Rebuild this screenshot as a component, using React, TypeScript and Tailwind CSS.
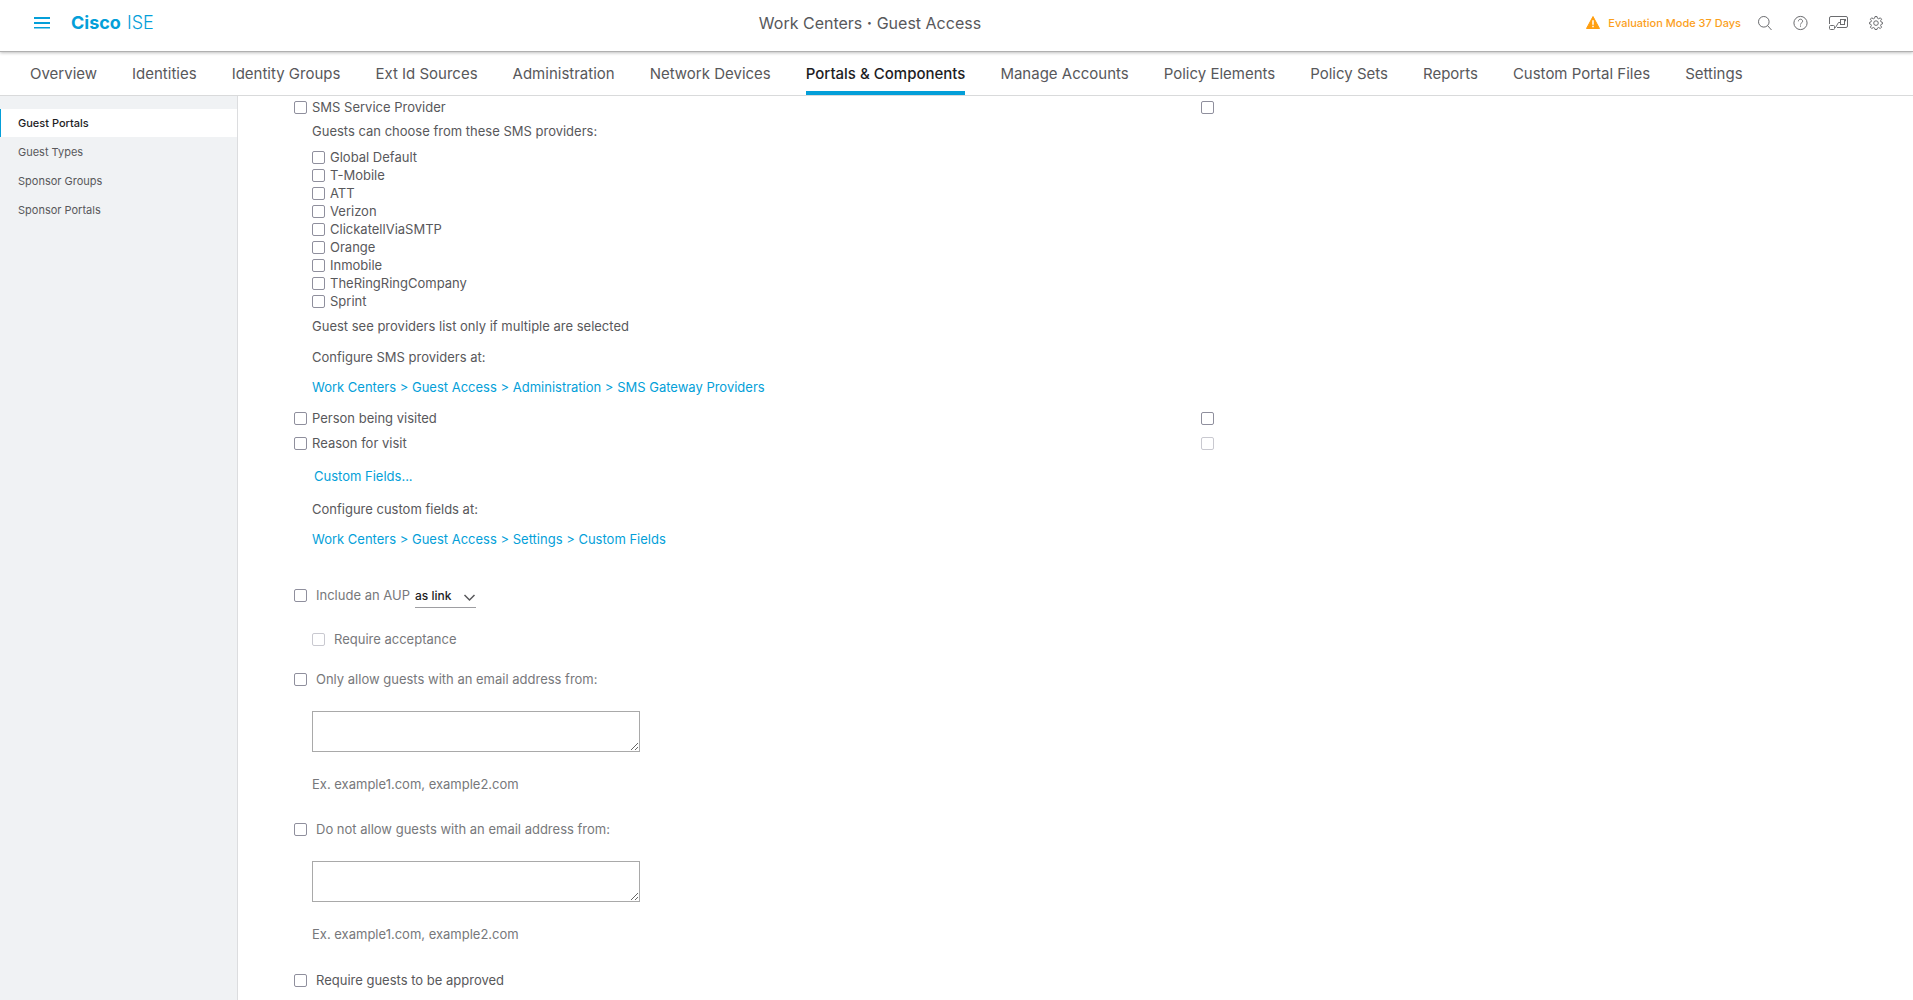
import React, { useId } from "react";

const tabs = [
  "Overview",
  "Identities",
  "Identity Groups",
  "Ext Id Sources",
  "Administration",
  "Network Devices",
  "Portals & Components",
  "Manage Accounts",
  "Policy Elements",
  "Policy Sets",
  "Reports",
  "Custom Portal Files",
  "Settings",
];

const sections = ["Guest Portals", "Guest Types", "Sponsor Groups", "Sponsor Portals"];

const providers = [
  "Global Default",
  "T-Mobile",
  "ATT",
  "Verizon",
  "ClickatellViaSMTP",
  "Orange",
  "Inmobile",
  "TheRingRingCompany",
  "Sprint",
];

type CheckProps = { id?: string; label?: string; disabled?: boolean };

function Check({ id, label, disabled }: CheckProps) {
  return (
    <input
      id={id}
      type="checkbox"
      aria-label={label}
      disabled={disabled}
      className="size-[13px] shrink-0 appearance-none rounded-[2px] border border-[#8f8f9d] bg-white checked:bg-[#049fd9] disabled:border-[#c9c9d0]"
    />
  );
}

type FieldProps = {
  children: React.ReactNode;
  wide?: boolean;
  muted?: boolean;
  disabled?: boolean;
};

function CheckField({ children, wide, muted, disabled }: FieldProps) {
  const id = useId();
  return (
    <div className={wide ? "flex h-[18px] items-center gap-[9px]" : "flex h-[18px] items-center gap-[5px]"}>
      <Check id={id} disabled={disabled} />
      <label htmlFor={id} className={muted ? "text-[#77787b]" : ""}>
        {children}
      </label>
    </div>
  );
}

function RequiredRow({ name, disabled }: { name: string; disabled?: boolean }) {
  return (
    <div className="flex items-center">
      <div className="w-[56%]">
        <CheckField>{name}</CheckField>
      </div>
      <Check label={`${name} required`} disabled={disabled} />
    </div>
  );
}

function DomainField({ label }: { label: string }) {
  return (
    <>
      <CheckField wide muted>
        {label}
      </CheckField>
      <div className="mt-[23px] ml-[18px] text-[#77787b]">
        <textarea
          aria-label={label}
          className="block h-[41px] w-[328px] resize border border-[#a9a9a9] bg-white"
        />
        <p className="mt-[23px]">Ex. example1.com, example2.com</p>
      </div>
    </>
  );
}

function IconButton({ label, children }: { label: string; children: React.ReactNode }) {
  return (
    <button type="button" aria-label={label} className="text-[#6b6c6f]">
      {children}
    </button>
  );
}

export default function App() {
  return (
    <div className="flex min-h-screen flex-col bg-white font-['Inter','Liberation_Sans',sans-serif] text-[13px] leading-[18px] text-[#58585b]">
      <header className="relative flex h-[52px] items-center justify-between border-b border-[#b0b0b0] pr-[30px] pb-[6px] pl-[34px] shadow-[0_1px_3px_rgba(0,0,0,0.25)]">
        <div className="flex items-center gap-[21px]">
          <button type="button" aria-label="Menu" className="text-[#049fd9]">
            <svg width="16" height="14" viewBox="0 0 16 14" fill="currentColor">
              <path d="M0 1h16v2H0zM0 6h16v2H0zM0 11h16v1.500H0z" />
            </svg>
          </button>
          <a href="#home" className="flex gap-[6px] text-[18px] leading-6 text-[#049fd9]">
            <span className="font-bold">Cisco</span>
            <span className="font-light">ISE</span>
          </a>
        </div>
        <h1 className="text-[16px] leading-6">
          Work Centers <b>·</b> Guest Access
        </h1>
        <div className="flex items-center">
          <svg width="14" height="13" viewBox="0 0 14 13">
            <path d="M7 .5 13.500 12.500H.5z" fill="#ff9e0f" stroke="#ff9e0f" strokeLinejoin="round" />
            <path d="M7 4.300v4.400M7 9.800v1.500" stroke="#fff" strokeWidth="1.500" />
          </svg>
          <a href="#licensing" className="ml-2 text-[11px] font-medium text-[#fba01c]">
            Evaluation Mode 37 Days
          </a>
          <div className="ml-[17px] flex items-center gap-[21px]">
            <IconButton label="Search">
              <svg width="14" height="16" viewBox="0 0 14 16" fill="none" stroke="currentColor">
                <circle cx="5.800" cy="6.800" r="5.300" />
                <path d="m9.500 10.500 4 4.500" />
              </svg>
            </IconButton>
            <IconButton label="Help">
              <svg width="15" height="16" viewBox="0 0 15 16" fill="none" stroke="currentColor">
                <circle cx="7.500" cy="8" r="6.600" />
                <path d="M5.400 6.300c0-2.800 4.200-2.800 4.200 0 0 1.600-2.100 1.600-2.100 3.200M7.500 10.500v1.200" />
              </svg>
            </IconButton>
            <IconButton label="Guided workflows">
              <svg width="19" height="16" viewBox="0 0 19 16" fill="none" stroke="currentColor">
                <path d="M.5 9V3Q.5 1.500 2 1.500h15Q18.500 1.500 18.500 3v8q0 1.500-1.500 1.500H8" />
                <rect x=".5" y="10.500" width="5" height="4" rx="1" />
                <path d="M5.500 12.500h1L9.500 7.500h2" />
                <rect x="11.500" y="4.500" width="4" height="5" />
                <path d="M15.500 6h1V4" />
              </svg>
            </IconButton>
            <IconButton label="Settings">
              <svg width="14" height="16" viewBox="0 0 14 16" fill="none" stroke="currentColor" strokeLinejoin="round">
                <path d="M6 1.500h2l.4 1.700 1.300.6 1.600-1 1.300 1.400-1 1.500.5 1.300 1.400.4v1.500l-1.400.4-.5 1.300 1 1.500-1.300 1.400-1.600-1-1.300.6L8 14.500H6l-.4-1.400-1.300-.6-1.600 1-1.300-1.400 1-1.500-.5-1.300L.5 8.900V7.400L1.900 7l.5-1.300-1-1.500 1.300-1.400 1.600 1 1.300-.6z" />
                <circle cx="7" cy="8.100" r="2.300" />
              </svg>
            </IconButton>
          </div>
        </div>
      </header>

      <nav className="flex h-11 items-stretch gap-[35px] border-b border-[#d9dadb] pl-[30px] text-[15px] whitespace-nowrap">
        {tabs.map((tab) => {
          const active = tab === "Portals & Components";
          return (
            <a
              key={tab}
              href="#tab"
              aria-current={active ? "page" : undefined}
              className={
                active
                  ? "border-b-4 border-[#049fd9] pt-[13px] font-medium text-[#1d1d1f]"
                  : "pt-[13px]"
              }
            >
              {tab}
            </a>
          );
        })}
      </nav>

      <div className="flex flex-1">
        <aside className="w-[238px] shrink-0 border-r border-[#dcdddf] bg-[#f0f2f4] pt-[13px]">
          <ul className="text-[11px]">
            {sections.map((section, i) => (
              <li key={section}>
                <a
                  href="#section"
                  className={
                    i === 0
                      ? "flex h-7 items-center border-l border-[#049fd9] bg-white pl-[17px] font-medium text-[#1d1d1f]"
                      : "flex h-[29px] items-center pl-[18px]"
                  }
                >
                  {section}
                </a>
              </li>
            ))}
          </ul>
        </aside>

        <main className="min-w-0 flex-1 pt-[2px] pl-[56px]">
          <RequiredRow name="SMS Service Provider" />
          <div className="ml-[18px]">
            <p className="mt-[6px]">Guests can choose from these SMS providers:</p>
            <div className="mt-2">
              {providers.map((provider) => (
                <CheckField key={provider}>{provider}</CheckField>
              ))}
            </div>
            <p className="mt-[7px]">Guest see providers list only if multiple are selected</p>
            <p className="mt-[13px]">Configure SMS providers at:</p>
            <a href="#sms" className="mt-3 block w-fit text-[#049fd9]">
              Work Centers &gt; Guest Access &gt; Administration &gt; SMS Gateway Providers
            </a>
          </div>
          <div className="mt-[13px] flex flex-col gap-[7px]">
            <RequiredRow name="Person being visited" />
            <RequiredRow name="Reason for visit" disabled />
          </div>
          <div className="ml-[18px]">
            <button type="button" className="mt-[15px] ml-[2px] block text-[#049fd9]">
              Custom Fields...
            </button>
            <p className="mt-[15px]">Configure custom fields at:</p>
            <a href="#fields" className="mt-3 block w-fit text-[#049fd9]">
              Work Centers &gt; Guest Access &gt; Settings &gt; Custom Fields
            </a>
          </div>

          <div className="mt-[34px] flex items-center gap-[5px]">
            <CheckField wide muted>
              Include an AUP
            </CheckField>
            <div className="relative mt-[2px]">
              <select
                aria-label="AUP display"
                className="h-6 w-[61px] appearance-none border-b border-[#9e9ea2] bg-transparent text-[12px] font-medium text-[#1d1d1f]"
              >
                <option>as link</option>
              </select>
              <svg
                className="pointer-events-none absolute top-[10px] right-0"
                width="13"
                height="8"
                viewBox="0 0 13 8"
                fill="none"
                stroke="#58585b"
                strokeWidth="1.500"
              >
                <path d="m1.500 1 5 5 5-5" />
              </svg>
            </div>
          </div>
          <div className="mt-[22px] ml-[18px]">
            <CheckField wide muted disabled>
              Require acceptance
            </CheckField>
          </div>
          <div className="mt-[22px]">
            <DomainField label="Only allow guests with an email address from:" />
          </div>
          <div className="mt-[27px]">
            <DomainField label="Do not allow guests with an email address from:" />
          </div>
          <div className="mt-7">
            <CheckField wide>Require guests to be approved</CheckField>
          </div>
        </main>
      </div>
    </div>
  );
}
